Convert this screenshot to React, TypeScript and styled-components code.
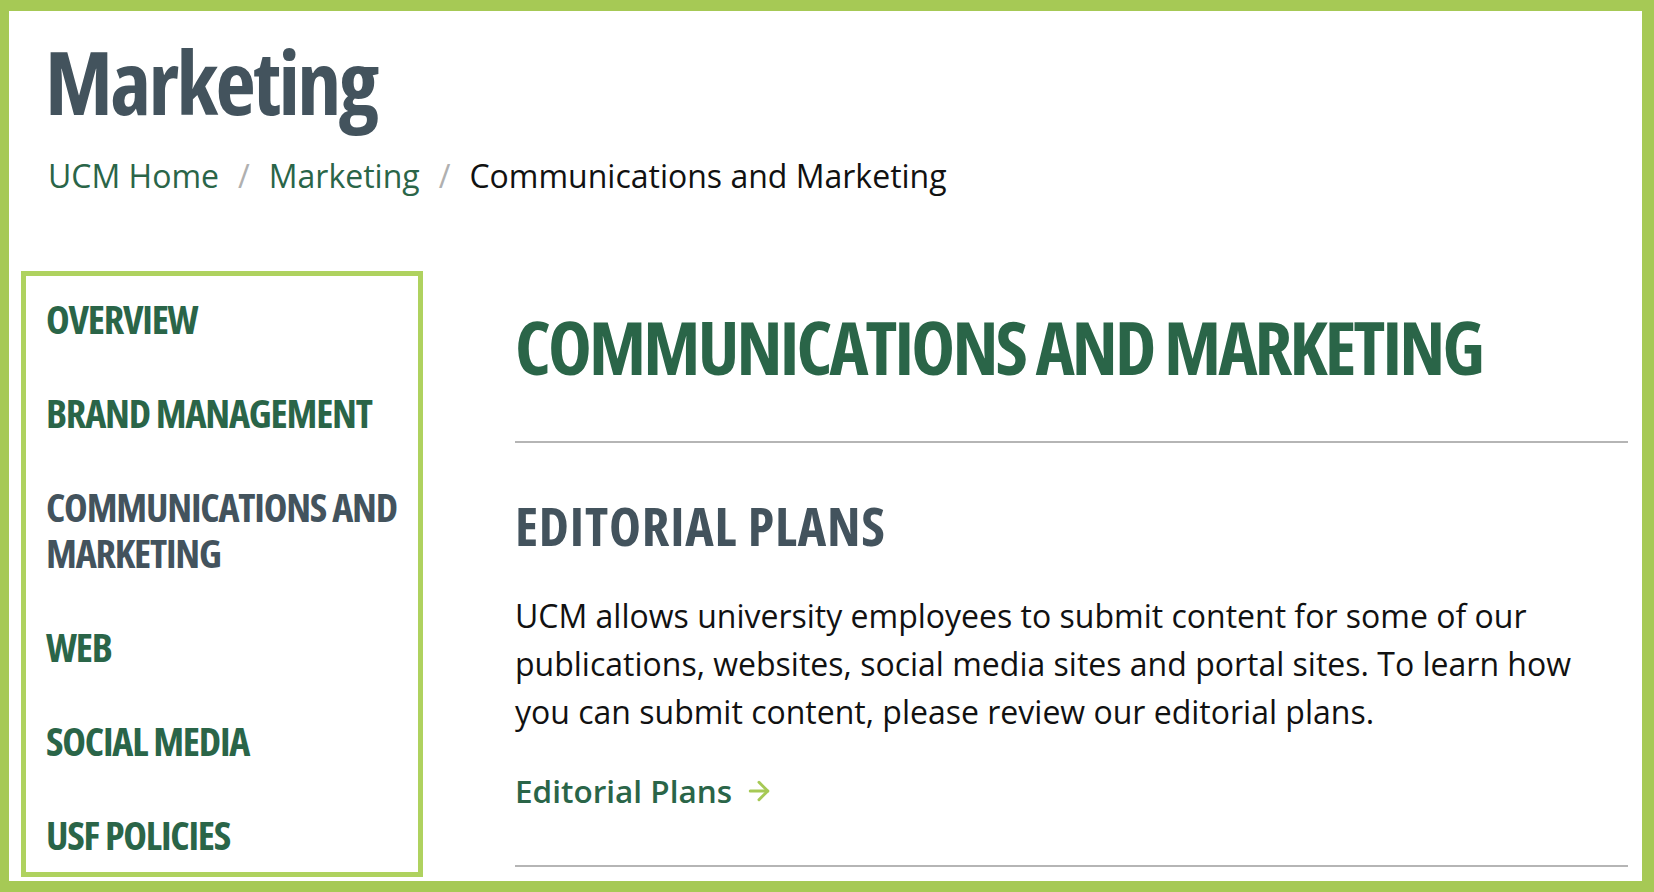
import React from 'react';
import styled, { createGlobalStyle } from 'styled-components';
import { ArrowRight } from 'lucide-react';

const GlobalStyle = createGlobalStyle`
  html, body {
    margin: 0;
    padding: 0;
    background: #fff;
  }
  * { box-sizing: border-box; }
`;

const green = '#2a6548';
const slate = '#43535d';
const lime = '#a6c955';

const navItems = [
  { label: 'Overview' },
  { label: 'Brand Management' },
  { label: 'Communications and Marketing', active: true },
  { label: 'Web' },
  { label: 'Social Media' },
  { label: 'USF Policies' },
];

const App = () => {
  return (
    <>
      <GlobalStyle />
      <Frame>
        <Header>
          <h1>Marketing</h1>
          <Crumbs>
            <a href="#">UCM Home</a>
            <Sep>/</Sep>
            <a href="#">Marketing</a>
            <Sep>/</Sep>
            <span>Communications and Marketing</span>
          </Crumbs>
        </Header>

        <Body>
          <SideNav>
            {navItems.map((item) => (
              <NavLink key={item.label} href="#" $active={!!item.active}>
                {item.label}
              </NavLink>
            ))}
          </SideNav>

          <Main>
            <h2>Communications and Marketing</h2>
            <Rule />
            <h3>Editorial Plans</h3>
            <p>
              UCM allows university employees to submit content for some of our
              publications, websites, social media sites and portal sites. To learn how
              you can submit content, please review our editorial plans.
            </p>
            <MoreLink href="#">
              Editorial Plans
              <ArrowRight size={30} strokeWidth={2.4} color={lime} />
            </MoreLink>
            <Rule $bottom />
          </Main>
        </Body>
      </Frame>
    </>
  );
};

const Frame = styled.div`
  width: 1654px;
  height: 892px;
  overflow: hidden;
  border-style: solid;
  border-color: ${lime};
  border-width: 11px 12px 11px 9px;
  background: #fff;
  display: flex;
  flex-direction: column;
`;

const Header = styled.header`
  padding: 25px 0 0 36px;

  > h1 {
    margin: 0;
    font-family: "Open Sans", sans-serif;
    font-stretch: 75%;
    font-weight: 700;
    font-size: 88px;
    line-height: 90px;
    letter-spacing: -2.6px;
    color: ${slate};
  }
`;

const Crumbs = styled.nav`
  margin-top: 30px;
  display: flex;
  align-items: center;
  font-family: "Open Sans", sans-serif;
  font-size: 32px;
  line-height: 40px;
  color: #111;
  padding-left: 3px;

  a {
    color: ${green};
    font-weight: 500;
    text-decoration: none;
  }
`;

const Sep = styled.span`
  color: #b0b0b0;
  margin: 0 19px;
`;

const Body = styled.div`
  margin-top: 75px;
  padding: 0 14px 0 12px;
  display: flex;
  gap: 92px;
  align-items: flex-start;
`;

const SideNav = styled.aside`
  flex: 0 0 402px;
  height: 606px;
  border: 5px solid #afd25f;
  padding: 20px 8px 0 20px;
  display: flex;
  flex-direction: column;
  gap: 48px;
`;

const NavLink = styled.a<{ $active: boolean }>`
  font-family: "Open Sans", sans-serif;
  font-stretch: 75%;
  font-weight: 700;
  font-size: 40px;
  line-height: 46px;
  letter-spacing: -1.2px;
  text-transform: uppercase;
  text-decoration: none;
  color: ${(p) => (p.$active ? slate : green)};
`;

const Main = styled.main`
  flex: 1;
  padding-top: 36px;

  > h2 {
    margin: 0;
    font-family: "Open Sans", sans-serif;
    font-stretch: 75%;
    font-weight: 700;
    font-size: 74px;
    line-height: 80px;
    letter-spacing: -2.8px;
    text-transform: uppercase;
    color: ${green};
  }

  > h3 {
    margin: 52px 0 0;
    font-family: "Open Sans", sans-serif;
    font-stretch: 75%;
    font-weight: 700;
    font-size: 54px;
    line-height: 60px;
    letter-spacing: 0.8px;
    text-transform: uppercase;
    color: ${slate};
  }

  > p {
    margin: 37px 0 0;
    max-width: 1090px;
    font-family: "Open Sans", sans-serif;
    font-size: 32px;
    line-height: 48px;
    color: #111;
  }
`;

const Rule = styled.hr<{ $bottom?: boolean }>`
  margin: ${(p) => (p.$bottom ? '50px 0 0' : '54px 0 0')};
  border: 0;
  height: 2px;
  background: #b5b5b5;
`;

const MoreLink = styled.a`
  margin-top: 31px;
  display: inline-flex;
  align-items: center;
  gap: 12px;
  font-family: "Open Sans", sans-serif;
  font-size: 31.5px;
  font-weight: 600;
  line-height: 48px;
  color: ${green};
  text-decoration: none;
`;

export default App;
